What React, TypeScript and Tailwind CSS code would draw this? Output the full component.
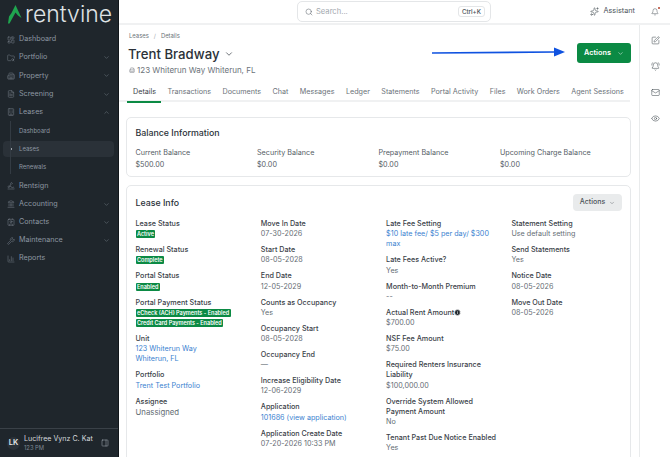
import {
  BarChart3,
  BellRing,
  Bell,
  Building,
  Building2,
  ChevronDown,
  ChevronUp,
  Contact,
  Eye,
  FileText,
  FolderSearch,
  Info,
  Landmark,
  LayoutDashboard,
  Mail,
  PanelRight,
  Search,
  Signature,
  Sparkles,
  SquarePen,
  Wrench,
} from "lucide-react";
import type { ElementType, ReactNode } from "react";

const NavItem = ({ icon: Icon, label, caret }: { icon: ElementType; label: string; caret?: "down" | "up" }) => (
  <div className="h-[18.2px] flex items-center pl-[7px] pr-[8px] text-[7.2px] text-[#8d97a2]">
    <Icon size={8} strokeWidth={1.4} className="shrink-0 text-[#7f8993]" />
    <span className="ml-[4px] flex-1">{label}</span>
    {caret === "down" && <ChevronDown size={7} strokeWidth={1.5} className="text-[#7f8993]" />}
    {caret === "up" && <ChevronUp size={7} strokeWidth={1.5} className="text-[#7f8993]" />}
  </div>
);

const SubItem = ({ label, active }: { label: string; active?: boolean }) => (
  <div className="h-[18.2px] flex items-center">
    <div className={`h-[16px] flex-1 ml-[3px] mr-[4px] rounded-[4px] flex items-center text-[6px] text-[#8d97a2] ${active ? "bg-[#2a3138]" : ""}`}>
      <span className={`w-[2px] h-[2px] rounded-full ml-[7px] mr-[7px] ${active ? "bg-[#c4cad0]" : ""}`} />
      {label}
    </div>
  </div>
);

const Sidebar = () => (
  <aside className="w-[119px] shrink-0 bg-[#1f262c] border-r border-[#11161a] flex flex-col">
    <div className="h-[30.5px] flex items-center pl-[8px] gap-[3px]">
      <svg width="14" height="19" viewBox="0 0 14 19" className="-mt-[1px]">
        <path d="M7.5 0 L13.5 13 L10 10.5 L7.5 7.5 L1.5 18.5 L0 18.5 L1 11.5 L3.5 8 Z" fill="#1fa64f" />
      </svg>
      <span className="text-[23px] leading-none text-[#dfe2e5] font-light -mt-[2px]">rentvine</span>
    </div>
    <div>
      <NavItem icon={LayoutDashboard} label="Dashboard" />
      <NavItem icon={FolderSearch} label="Portfolio" caret="down" />
      <NavItem icon={Building2} label="Property" caret="down" />
      <NavItem icon={FileText} label="Screening" caret="down" />
      <NavItem icon={Building} label="Leases" caret="up" />
      <div className="relative">
        <div className="absolute left-[10px] top-0 bottom-[2px] w-px bg-[#333b43]" />
        <SubItem label="Dashboard" />
        <SubItem label="Leases" active />
        <SubItem label="Renewals" />
      </div>
      <div className="h-[1px]" />
      <NavItem icon={Signature} label="Rentsign" />
      <NavItem icon={Landmark} label="Accounting" caret="down" />
      <NavItem icon={Contact} label="Contacts" caret="down" />
      <NavItem icon={Wrench} label="Maintenance" caret="down" />
      <NavItem icon={BarChart3} label="Reports" />
    </div>
    <div className="mt-auto h-[29px] border-t border-[#3a4148] flex items-center pl-[7px] pr-[9px]">
      <div className="w-[13px] h-[13px] rounded-full bg-[#2b3239] text-[7.5px] font-semibold text-[#e4e7ea] flex items-center justify-center">LK</div>
      <div className="ml-[4px] flex-1 leading-[9px]">
        <div className="text-[7.1px] text-[#d5d9dd] whitespace-nowrap">Lucifree Vynz C. Kat</div>
        <div className="text-[5.8px] text-[#7e8893]">123 PM</div>
      </div>
      <PanelRight size={8} strokeWidth={1.5} className="text-[#aab2ba]" />
    </div>
  </aside>
);

const TopBar = () => (
  <header className="h-[25px] shrink-0 border-b-2 border-[#f0f1f2] flex items-center relative">
    <div className="ml-[178px] w-[194px] h-[21px] border border-[#e4e6e8] rounded-[5px] flex items-center pl-[7px] pr-[5px]">
      <Search size={8} strokeWidth={1.5} className="text-[#555d65]" />
      <span className="ml-[3px] text-[7.6px] text-[#a3a9af] flex-1">Search...</span>
      <span className="border border-[#e4e6e8] rounded-[3px] px-[3px] h-[11px] leading-[9px] text-[6.2px] font-medium text-[#4b5359]">Ctrl+K</span>
    </div>
    <div className="ml-auto flex items-center text-[#4b5359] text-[7.3px] pr-[11px]">
      <Sparkles size={9} strokeWidth={1.5} />
      <span className="ml-[4px] mr-[16px]">Assistant</span>
      <div className="relative">
        <Bell size={8} strokeWidth={1.5} />
        <span className="absolute -top-[1px] -right-[1px] w-[2.5px] h-[2.5px] rounded-full bg-[#b5402a]" />
      </div>
    </div>
  </header>
);

const tabs = ["Details", "Transactions", "Documents", "Chat", "Messages", "Ledger", "Statements", "Portal Activity", "Files", "Work Orders", "Agent Sessions"];

const Field = ({ label, children }: { label: ReactNode; children: ReactNode }) => (
  <div className="mb-[5.8px]">
    <div className="text-[7.2px] leading-[10.2px] font-medium text-[#3a4148]">{label}</div>
    <div className="text-[7.2px] leading-[10.2px] text-[#656d74]">{children}</div>
  </div>
);

const Badge = ({ children }: { children: ReactNode }) => (
  <div className="h-[10.2px] flex items-center">
    <span className="h-[8px] px-[1.5px] rounded-[1px] bg-[#0b8a44] text-[5.5px] leading-[8px] font-semibold text-white whitespace-nowrap">{children}</span>
  </div>
);

const Link = ({ children }: { children: ReactNode }) => <span className="text-[#3b82d0]">{children}</span>;

const Balance = ({ label, value }: { label: string; value: string }) => (
  <div className="w-[123.3px] text-[7.2px] leading-[10px] text-[#555d65]">
    <div className="mb-[2px]">{label}</div>
    <div>{value}</div>
  </div>
);

export default function App() {
  return (
    <div className="w-[670px] h-[457px] overflow-hidden flex bg-white font-['Inter',sans-serif]">
      <Sidebar />
      <div className="flex-1 min-w-0 flex flex-col">
        <TopBar />
        <div className="flex-1 min-h-0 flex">
          <main className="w-[520px] shrink-0 overflow-hidden relative">
            <div className="pl-[10px] pt-[6px]">
              <div className="flex items-center text-[5.9px] leading-[8px] text-[#6b7279] mt-[1px]">
                <span>Leases</span>
                <span className="mx-[5px] text-[#a3a9af]">/</span>
                <span>Details</span>
              </div>
              <div className="mt-[4px] flex items-center text-[13.2px] leading-[20px] font-medium text-[#2a3138] -ml-[1px]">
                Trent Bradway
                <ChevronDown size={10} strokeWidth={1.6} className="ml-[4px]" />
              </div>
              <div className="mt-[1px] flex items-center text-[8px] leading-[10px] text-[#6b7279]">
                <Building2 size={6} strokeWidth={1.5} className="mr-[2px]" />
                123 Whiterun Way Whiterun, FL
              </div>
            </div>
            <div className="absolute top-[18px] right-[8px] w-[54px] h-[20px] rounded-[3px] bg-[#0b8a44] text-white text-[7.3px] font-semibold flex items-center justify-center gap-[6px]">
              Actions
              <ChevronDown size={7} strokeWidth={1.6} />
            </div>
            <svg className="absolute left-[313px] top-[22px]" width="134" height="10" viewBox="0 0 134 10">
              <path d="M0 6 L122 5" stroke="#0f52e0" strokeWidth="1.6" />
              <path d="M122 0.5 L133 5 L122 9.5 Z" fill="#0f52e0" />
            </svg>
            <div className="mt-[9px] h-[18px] border-b-2 border-[#f0f1f2] pl-[14px] flex gap-[11.4px] text-[7.2px] text-[#6b7279] w-[511px]">
              {tabs.map((t, i) => (
                <div
                  key={t}
                  className={`relative h-[18px] leading-[15px] whitespace-nowrap ${i === 0 ? "text-[#3a4148]" : ""}`}
                >
                  {t}
                  {i === 0 && <span className="absolute -left-[6px] -right-[5px] bottom-[-1px] h-[2px] bg-[#0b8a44]" />}
                </div>
              ))}
            </div>
            <section className="ml-[7px] mr-[8px] mt-[15px] h-[60px] border border-[#e6e8ea] rounded-[5px] px-[8.5px] pt-[9px]">
              <h3 className="text-[8.8px] leading-[11px] font-medium text-[#2a3138]">Balance Information</h3>
              <div className="mt-[10px] flex">
                <Balance label="Current Balance" value="$500.00" />
                <Balance label="Security Balance" value="$0.00" />
                <Balance label="Prepayment Balance" value="$0.00" />
                <Balance label="Upcoming Charge Balance" value="$0.00" />
              </div>
            </section>
            <section className="ml-[7px] mr-[8px] mt-[8px] h-[300px] border border-[#e6e8ea] rounded-[5px] pl-[8.5px] pt-[10px] relative">
              <h3 className="text-[8.8px] leading-[14px] font-medium text-[#2a3138]">Lease Info</h3>
              <div className="absolute top-[8px] right-[8px] w-[49px] h-[17px] rounded-[4px] bg-[#e9ebec] text-[#4b5359] text-[7px] font-medium flex items-center justify-center gap-[4px]">
                Actions
                <ChevronDown size={6} strokeWidth={1.6} />
              </div>
              <div className="mt-[9px] flex">
                <div className="w-[125.3px] shrink-0 pr-[4px]">
                  <Field label="Lease Status"><Badge>Active</Badge></Field>
                  <Field label="Renewal Status"><Badge>Complete</Badge></Field>
                  <Field label="Portal Status"><Badge>Enabled</Badge></Field>
                  <div className="mb-[5.8px]">
                    <div className="text-[7.2px] leading-[10.2px] font-medium text-[#3a4148]">Portal Payment Status</div>
                    <Badge>eCheck (ACH) Payments - Enabled</Badge>
                    <Badge>Credit Card Payments - Enabled</Badge>
                  </div>
                  <Field label="Unit"><Link>123 Whiterun Way<br />Whiterun, FL</Link></Field>
                  <Field label="Portfolio"><Link>Trent Test Portfolio</Link></Field>
                  <Field label="Assignee"><span className="text-[7.8px]">Unassigned</span></Field>
                </div>
                <div className="w-[125.3px] shrink-0 pr-[4px]">
                  <Field label="Move In Date">07-30-2026</Field>
                  <Field label="Start Date">08-05-2028</Field>
                  <Field label="End Date">12-05-2029</Field>
                  <Field label="Counts as Occupancy">Yes</Field>
                  <Field label="Occupancy Start">08-05-2028</Field>
                  <Field label="Occupancy End">—</Field>
                  <Field label="Increase Eligibility Date">12-06-2029</Field>
                  <Field label="Application"><Link>101686 (view application)</Link></Field>
                  <Field label="Application Create Date">07-20-2026 10:33 PM</Field>
                </div>
                <div className="w-[125.3px] shrink-0 pr-[12px]">
                  <Field label="Late Fee Setting"><Link>$10 late fee/ $5 per day/ $300 max</Link></Field>
                  <Field label="Late Fees Active?">Yes</Field>
                  <Field label="Month-to-Month Premium">--</Field>
                  <Field
                    label={
                      <span className="flex items-center">
                        Actual Rent Amount
                        <Info size={7} strokeWidth={2} className="fill-[#1f262c] text-white" />
                      </span>
                    }
                  >
                    $700.00
                  </Field>
                  <Field label="NSF Fee Amount">$75.00</Field>
                  <Field label="Required Renters Insurance Liability">$100,000.00</Field>
                  <Field label="Override System Allowed Payment Amount">No</Field>
                  <Field label="Tenant Past Due Notice Enabled">Yes</Field>
                </div>
                <div className="w-[110px] shrink-0">
                  <Field label="Statement Setting">Use default setting</Field>
                  <Field label="Send Statements">Yes</Field>
                  <Field label="Notice Date">08-05-2026</Field>
                  <Field label="Move Out Date">08-05-2026</Field>
                </div>
              </div>
            </section>
          </main>
          <div className="flex-1 border-l border-[#e9ebec] flex flex-col items-center pt-[11px] gap-[17px] text-[#4b5359]">
            <SquarePen size={9} strokeWidth={1.5} />
            <BellRing size={9} strokeWidth={1.5} />
            <Mail size={9} strokeWidth={1.5} />
            <Eye size={9} strokeWidth={1.5} />
          </div>
        </div>
      </div>
    </div>
  );
}
